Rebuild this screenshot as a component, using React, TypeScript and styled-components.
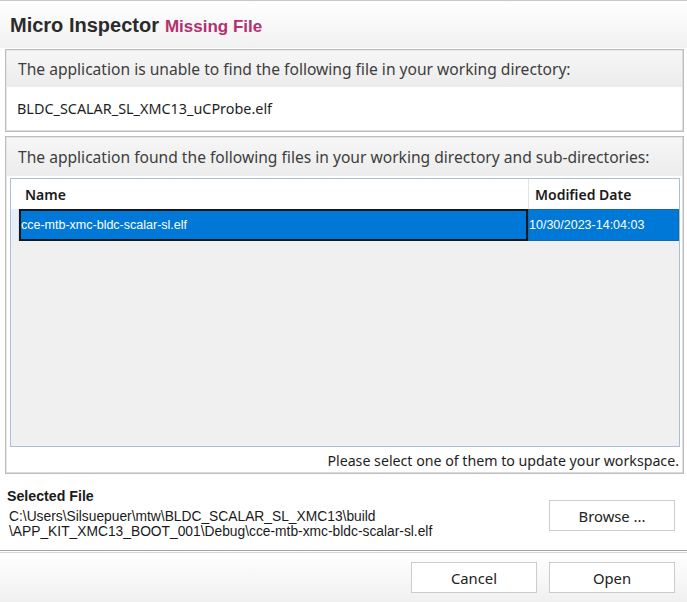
import React from 'react';
import styled, { createGlobalStyle } from 'styled-components';

const GlobalStyle = createGlobalStyle`
  html, body {
    margin: 0;
    padding: 0;
    background: #ffffff;
  }
  body {
    font-family: 'Noto Sans', 'Open Sans', sans-serif;
    color: #333333;
  }
`;

const uiFont = `'Noto Sans', 'Open Sans', sans-serif`;
const arial = `'Liberation Sans', Arial, sans-serif`;

const Window = styled.div`
  width: 687px;
  height: 602px;
  display: flex;
  flex-direction: column;
  background: #ffffff;
  box-sizing: border-box;
  overflow: hidden;
`;

const Header = styled.header`
  height: 48px;
  box-sizing: border-box;
  padding: 12px 0 0 10px;
  border-top: 1px solid #c9c9c9;
  background: linear-gradient(to bottom, #ffffff 0%, #f1f1f1 100%);
  display: flex;
  align-items: baseline;
  gap: 6px;
  line-height: 24px;
`;

const Title = styled.span`
  font-family: ${arial};
  font-weight: bold;
  font-size: 20px;
  color: #2b2b2b;
`;

const Subtitle = styled.span`
  font-family: ${arial};
  font-weight: bold;
  font-size: 17px;
  color: #b3306f;
`;

const Body = styled.main`
  flex: 1;
  display: flex;
  flex-direction: column;
  padding: 1px 3px 0 5px;
  gap: 4px;
`;

const Panel = styled.section<{ $height: number }>`
  height: ${(p) => p.$height}px;
  box-sizing: border-box;
  border: 1px solid #bdbdbd;
  box-shadow: inset -1px -1px 0 #dcdcdc, inset 1px 1px 0 #e6e6e6;
  display: flex;
  flex-direction: column;
  background: #ffffff;
`;

const PanelHeading = styled.div<{ $height: number }>`
  height: ${(p) => p.$height}px;
  margin: 1px 1px 0 1px;
  padding-left: 11px;
  display: flex;
  align-items: center;
  background: linear-gradient(to bottom, #f6f6f6 0%, #ececec 100%);
  font-family: ${uiFont};
  font-size: 15.6px;
  color: #3d3d3d;
  white-space: nowrap;
`;

const FileName = styled.div`
  flex: 1;
  display: flex;
  align-items: center;
  padding: 0 0 2px 11px;
  font-family: ${uiFont};
  font-size: 14.4px;
  color: #1e1e1e;
`;

const Table = styled.div`
  height: 269px;
  margin: 2px 3px 0 4px;
  box-sizing: border-box;
  border: 1px solid #a8bfd8;
  background: #f0f0f0;
  display: flex;
  flex-direction: column;
`;

const HeadRow = styled.div`
  height: 30px;
  display: grid;
  grid-template-columns: 8px 509px 1fr;
  background: #ffffff;
`;

const HeadCell = styled.div<{ $divider?: boolean }>`
  display: flex;
  align-items: center;
  padding-left: 6px;
  border-left: ${(p) => (p.$divider ? '1px solid #e3e3e3' : 'none')};
  font-family: ${uiFont};
  font-weight: 600;
  font-size: 14px;
  color: #1a1a1a;
`;

const Gutter = styled.div<{ $selected?: boolean }>`
  background: ${(p) => (p.$selected ? '#e9eff6' : '#ffffff')};
  border-right: ${(p) => (p.$selected ? '1px solid #d6e0ec' : 'none')};
`;

const DataRow = styled.div`
  height: 32px;
  display: grid;
  grid-template-columns: 8px 509px 1fr;
`;

const DataCell = styled.div<{ $focused?: boolean }>`
  display: flex;
  align-items: center;
  padding-left: 0;
  background: #0078d7;
  box-sizing: border-box;
  border: ${(p) => (p.$focused ? '2px solid #101820' : '1px solid #1567b0')};
  font-family: ${arial};
  font-size: 12.5px;
  color: #ffffff;
  white-space: nowrap;
  overflow: hidden;
`;

const TableNote = styled.div`
  flex: 1;
  display: flex;
  align-items: center;
  justify-content: flex-end;
  padding-right: 4px;
  font-family: ${uiFont};
  font-size: 14.2px;
  color: #1e1e1e;
`;

const SelectedArea = styled.div`
  flex: 1;
  display: flex;
  align-items: flex-start;
  justify-content: space-between;
  padding: 14px 12px 0 7px;
`;

const SelectedInfo = styled.div`
  display: flex;
  flex-direction: column;
`;

const Label = styled.div`
  font-family: ${arial};
  font-weight: bold;
  font-size: 14.2px;
  line-height: 16px;
  color: #1a1a1a;
`;

const PathText = styled.div`
  margin-top: 5px;
  padding-left: 2px;
  font-family: ${arial};
  font-size: 13.8px;
  line-height: 15px;
  color: #1a1a1a;
`;

const Button = styled.button`
  width: 126px;
  height: 31px;
  box-sizing: border-box;
  border: 1px solid #cccccc;
  background: #ffffff;
  font-family: ${uiFont};
  font-size: 14.8px;
  color: #222222;
  padding: 0;
  cursor: pointer;
`;

const BrowseButton = styled(Button)`
  margin-top: 12px;
`;

const Separator = styled.hr`
  margin: 0;
  height: 1px;
  border: none;
  border-top: 1px solid #a3a3a3;
  border-bottom: 1px solid #d6d6d6;
`;

const Footer = styled.footer`
  height: 49px;
  box-sizing: border-box;
  padding: 9px 12px 0 0;
  display: flex;
  justify-content: flex-end;
  gap: 12px;
  background: linear-gradient(to bottom, #ffffff 0%, #f0f0f0 100%);
`;

const files = [
  { name: 'cce-mtb-xmc-bldc-scalar-sl.elf', modified: '10/30/2023-14:04:03' },
];

export default function App() {
  return (
    <>
      <GlobalStyle />
      <Window>
        <Header>
          <Title>Micro Inspector</Title>
          <Subtitle>Missing File</Subtitle>
        </Header>

        <Body>
          <Panel $height={83}>
            <PanelHeading $height={36}>
              The application is unable to find the following file in your working directory:
            </PanelHeading>
            <FileName>BLDC_SCALAR_SL_XMC13_uCProbe.elf</FileName>
          </Panel>

          <Panel $height={338}>
            <PanelHeading $height={38}>
              The application found the following files in your working directory and sub-directories:
            </PanelHeading>
            <Table>
              <HeadRow>
                <Gutter />
                <HeadCell>Name</HeadCell>
                <HeadCell $divider>Modified Date</HeadCell>
              </HeadRow>
              {files.map((f) => (
                <DataRow key={f.name}>
                  <Gutter $selected />
                  <DataCell $focused>{f.name}</DataCell>
                  <DataCell>{f.modified}</DataCell>
                </DataRow>
              ))}
            </Table>
            <TableNote>Please select one of them to update your workspace.</TableNote>
          </Panel>
        </Body>

        <SelectedArea>
          <SelectedInfo>
            <Label>Selected File</Label>
            <PathText>
              C:\Users\Silsuepuer\mtw\BLDC_SCALAR_SL_XMC13\build
              <br />
              \APP_KIT_XMC13_BOOT_001\Debug\cce-mtb-xmc-bldc-scalar-sl.elf
            </PathText>
          </SelectedInfo>
          <BrowseButton>Browse ...</BrowseButton>
        </SelectedArea>

        <Separator />

        <Footer>
          <Button>Cancel</Button>
          <Button>Open</Button>
        </Footer>
      </Window>
    </>
  );
}
